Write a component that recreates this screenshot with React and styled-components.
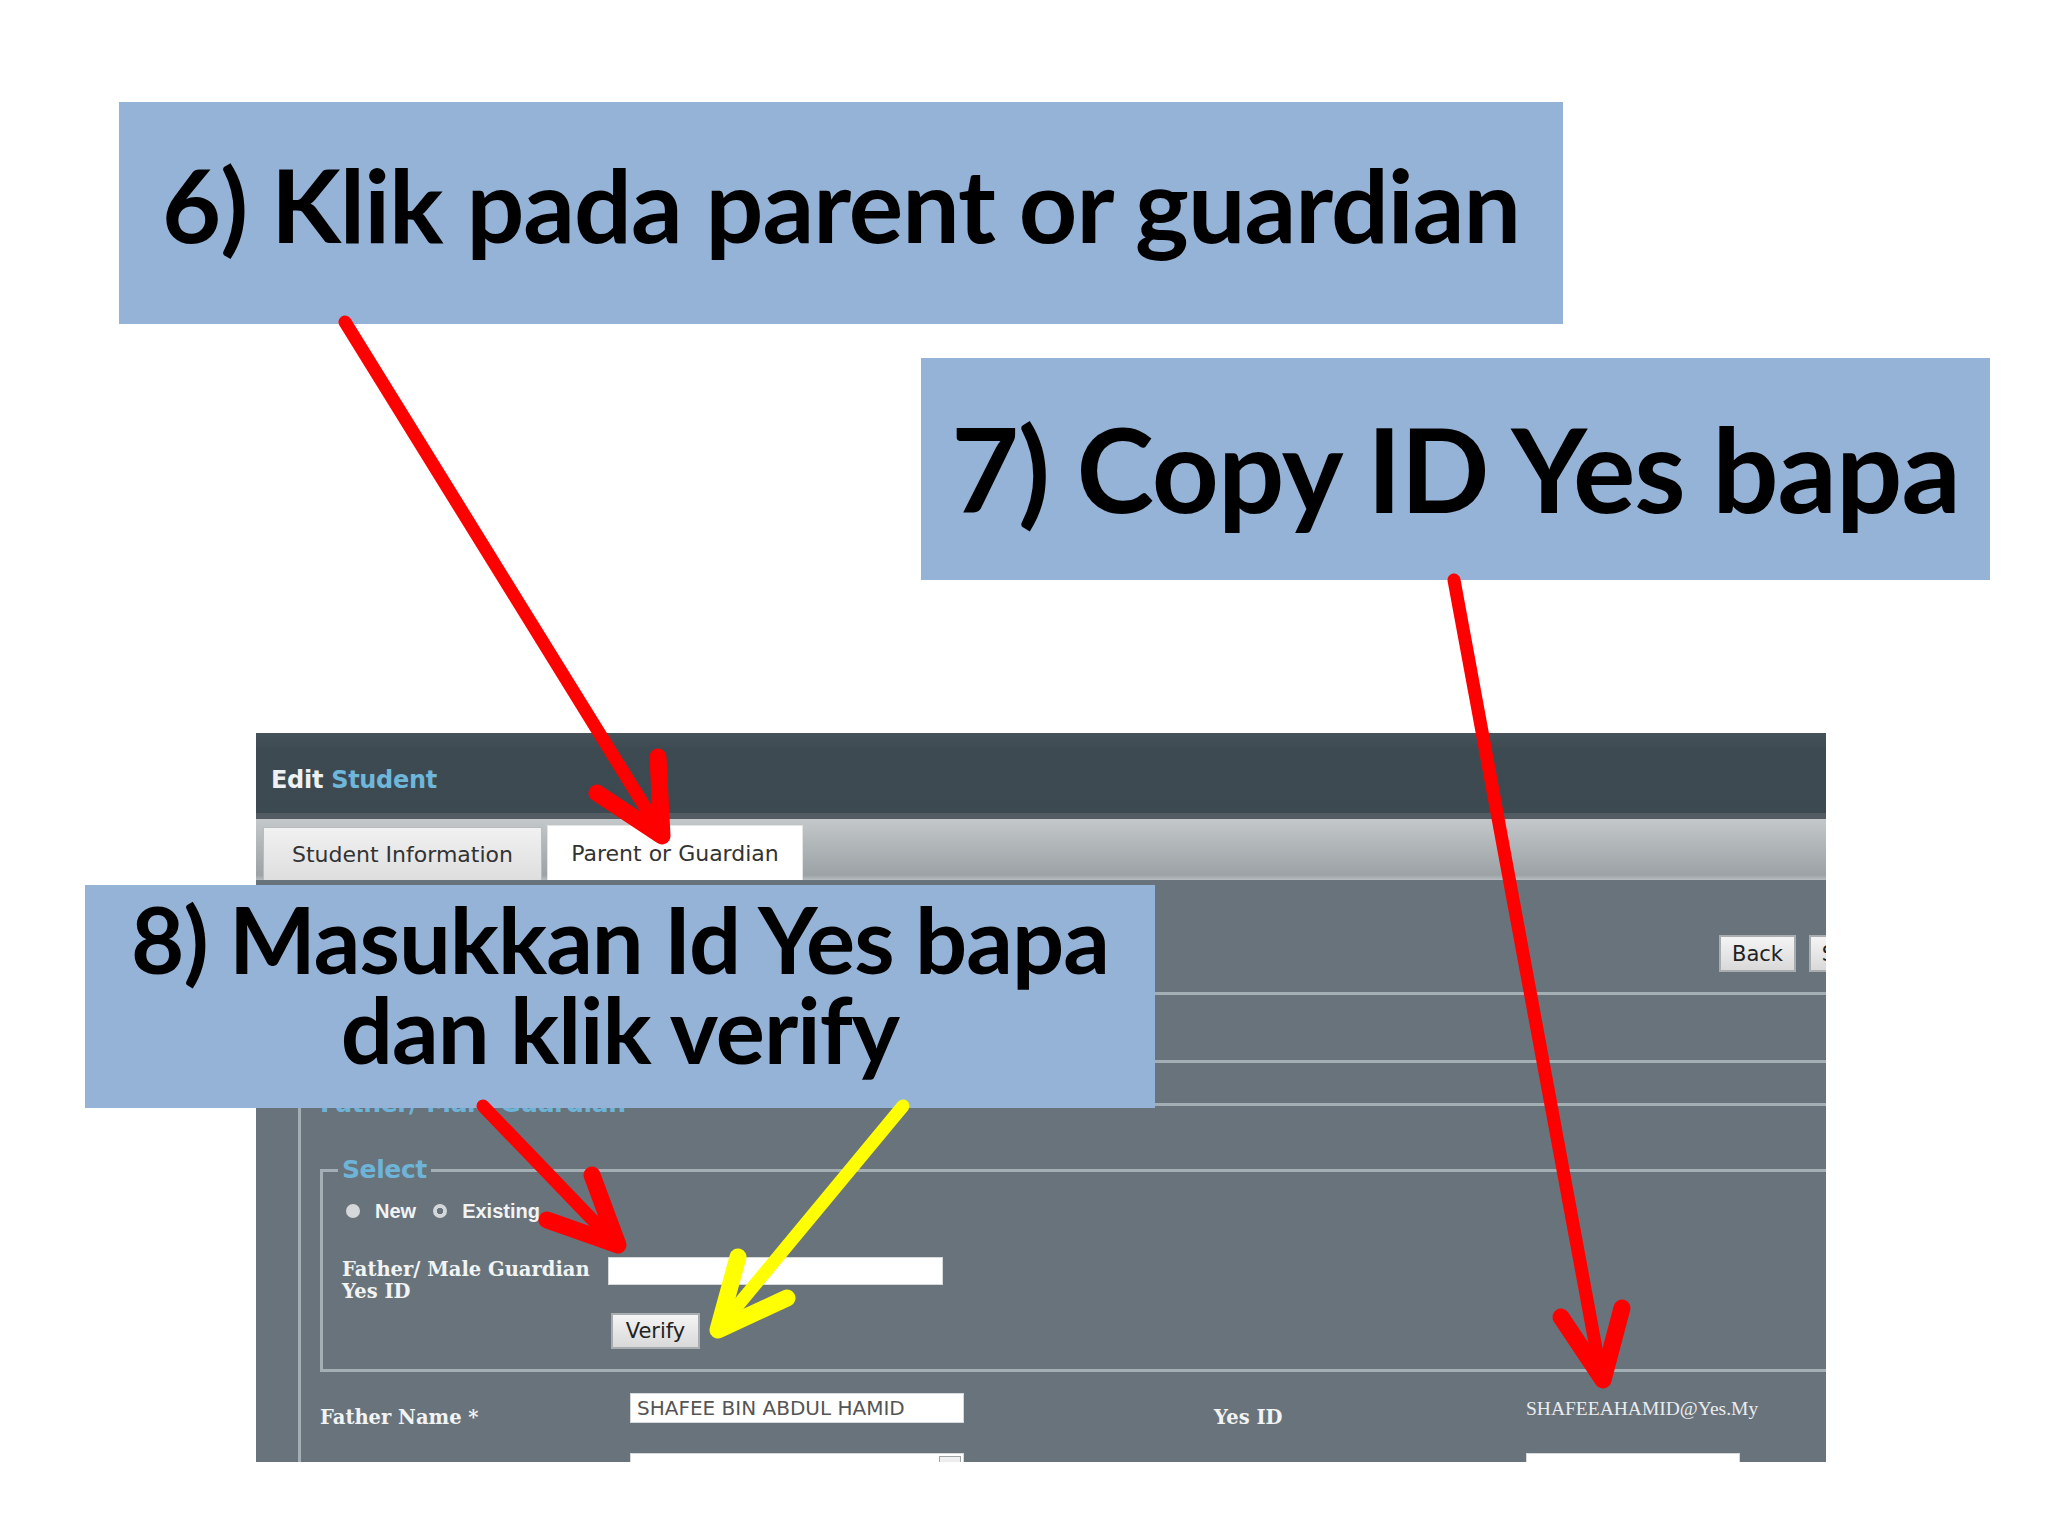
import React from 'react';
import styled, { createGlobalStyle } from 'styled-components';

const GlobalStyle = createGlobalStyle`
  html, body {
    margin: 0;
    padding: 0;
    background: #ffffff;
  }
  #root {
    width: 2048px;
    height: 1536px;
  }
`;

const arrows = [
  { color: '#ff0000', shaft: [345, 322, 658, 828], barb: '597,793 662,836 658,757' },
  { color: '#ff0000', shaft: [1454, 580, 1600, 1370], barb: '1561,1317 1603,1380 1622,1308' },
  { color: '#ff0000', shaft: [483, 1106, 610, 1238], barb: '547,1220 618,1245 592,1175' },
  { color: '#ffff00', shaft: [903, 1106, 724, 1322], barb: '738,1257 718,1330 787,1298' },
];

export default function App() {
  return (
    <>
      <GlobalStyle />
      <Slide>
        <Panel>
          <Header>
            <HeaderTitle>
              Edit <Accent>Student</Accent>
            </HeaderTitle>
          </Header>
          <TabBar>
            <Tab $width={279}>Student Information</Tab>
            <Tab $width={256} $active>Parent or Guardian</Tab>
          </TabBar>
          <Body>
            <Content>
              <ButtonRow>
                <Button>Back</Button>
                <Button>Save</Button>
              </ButtonRow>
              <Rule $top={20} />
              <Rule $top={65} />
              <GuardianSet>
                <SetTitle>Father/ Male Guardian</SetTitle>
                <SelectSet>
                  <SetTitle>Select</SetTitle>
                  <RadioRow>
                    <Radio />
                    <RadioText>New</RadioText>
                    <Radio $ring />
                    <RadioText>Existing</RadioText>
                  </RadioRow>
                  <LookupGrid>
                    <FieldLabel>
                      Father/ Male Guardian
                      <br />
                      Yes ID
                    </FieldLabel>
                    <TextBox $width={335} />
                    <span />
                    <Button $small>Verify</Button>
                  </LookupGrid>
                </SelectSet>
                <DataGrid>
                  <RowLabel>Father Name *</RowLabel>
                  <TextBox $width={334}>SHAFEE BIN ABDUL HAMID</TextBox>
                  <RowLabel>Yes ID</RowLabel>
                  <IdValue>SHAFEEAHAMID@Yes.My</IdValue>
                  <span />
                  <SelectBox>
                    <SelectArrow />
                  </SelectBox>
                  <span />
                  <TextBox $width={214} />
                </DataGrid>
              </GuardianSet>
            </Content>
          </Body>
        </Panel>

        <Callout $left={119} $top={102} $width={1444} $height={222} $size={102} $lift={10}>
          6) Klik pada parent or guardian
        </Callout>
        <Callout $left={921} $top={358} $width={1069} $height={222} $size={117} $lift={1}>
          7) Copy ID Yes bapa
        </Callout>
        <Callout $left={85} $top={885} $width={1070} $height={223} $size={92} $lift={13} $lines>
          8) Masukkan Id Yes bapa
          <br />
          dan klik verify
        </Callout>

        <ArrowLayer viewBox="0 0 2048 1536">
          {arrows.map((a, i) => (
            <g key={i} stroke={a.color} fill="none" strokeLinecap="round" strokeLinejoin="round">
              <line x1={a.shaft[0]} y1={a.shaft[1]} x2={a.shaft[2]} y2={a.shaft[3]} strokeWidth="13" />
              <polyline points={a.barb} strokeWidth="17" />
            </g>
          ))}
        </ArrowLayer>
      </Slide>
    </>
  );
}

const Slide = styled.div`
  position: relative;
  width: 2048px;
  height: 1536px;
  box-sizing: border-box;
  padding: 733px 0 0 256px;
  overflow: hidden;
  background: #ffffff;
`;

const Panel = styled.div`
  width: 1570px;
  height: 729px;
  overflow: hidden;
  display: flex;
  flex-direction: column;
  background: #69737b;
`;

const Header = styled.div`
  height: 80px;
  flex: none;
  box-sizing: border-box;
  padding: 33px 0 0 15px;
  background: linear-gradient(#46525a 0%, #3e4a51 20%, #3d4950 100%);
`;

const HeaderTitle = styled.div`
  font-family: "DejaVu Sans", sans-serif;
  font-weight: bold;
  font-size: 24px;
  line-height: 28px;
  letter-spacing: -0.3px;
  color: #eef1f2;
`;

const Accent = styled.span`
  color: #6eb6da;
`;

const TabBar = styled.div`
  height: 67px;
  flex: none;
  box-sizing: border-box;
  display: flex;
  align-items: flex-end;
  gap: 5px;
  padding-left: 7px;
  border-top: 6px solid #535c62;
  background: linear-gradient(#c4c8cb 0%, #b4b9bc 35%, #9da2a6 92%, #b8bdc0 100%);
`;

const Tab = styled.div`
  width: ${({ $width }) => $width}px;
  height: ${({ $active }) => ($active ? 55 : 53)}px;
  box-sizing: border-box;
  display: flex;
  align-items: center;
  justify-content: center;
  font-family: "DejaVu Sans", sans-serif;
  font-size: 22px;
  color: #333;
  background: ${({ $active }) => ($active ? '#ffffff' : 'linear-gradient(#f1f1f1, #dedede)')};
  border: 1px solid ${({ $active }) => ($active ? '#e4e4e4' : '#b9bcbe')};
  border-bottom: none;
`;

const Body = styled.div`
  flex: 1;
  background: #69737b;
`;

const Content = styled.div`
  width: 1634px;
  box-sizing: border-box;
  padding: 55px 4px 0 14px;
`;

const ButtonRow = styled.div`
  display: flex;
  justify-content: flex-end;
  gap: 13px;
`;

const Button = styled.div`
  width: ${({ $small }) => ($small ? 89 : 77)}px;
  height: ${({ $small }) => ($small ? 36 : 37)}px;
  box-sizing: border-box;
  display: flex;
  align-items: center;
  justify-content: center;
  font-family: "DejaVu Sans", sans-serif;
  font-size: 21px;
  color: #222;
  background: linear-gradient(#f4f4f4, #d9d9d9);
  border: 2px solid #a9adb0;
  ${({ $small }) => $small && 'margin-left: 3px;'}
`;

const Rule = styled.div`
  height: 3px;
  margin-top: ${({ $top }) => $top}px;
  background: #a4aeb5;
`;

const GuardianSet = styled.fieldset`
  margin: 26px 0 0 28px;
  padding: 0 0 0 19px;
  min-inline-size: 0;
  border: none;
  border-top: 3px solid #a4aeb5;
  border-left: 3px solid #a4aeb5;
`;

const SetTitle = styled.legend`
  margin-left: -4px;
  padding: 0 4px;
  font-family: "DejaVu Sans", sans-serif;
  font-weight: bold;
  font-size: 25px;
  line-height: 30px;
  letter-spacing: -0.4px;
  color: #6eb4d8;
`;

const SelectSet = styled.fieldset`
  margin: 36px 0 0 0;
  padding: 13px 0 20px 19px;
  min-inline-size: 0;
  border: none;
  border-top: 3px solid #a4aeb5;
  border-left: 3px solid #a4aeb5;
  border-bottom: 3px solid #a4aeb5;
`;

const RadioRow = styled.div`
  display: flex;
  align-items: center;
  height: 26px;
`;

const Radio = styled.span`
  width: 14px;
  height: 14px;
  margin: 0 15px 0 4px;
  border-radius: 50%;
  box-sizing: border-box;
  background: ${({ $ring }) => ($ring ? 'radial-gradient(circle, #6a747c 0 3px, #d4d8da 3.5px)' : '#d4d8da')};
`;

const RadioText = styled.span`
  margin-right: 13px;
  font-family: "Liberation Sans", Arial, sans-serif;
  font-weight: bold;
  font-size: 20px;
  color: #f1f3f4;
`;

const LookupGrid = styled.div`
  display: grid;
  grid-template-columns: 266px auto;
  grid-template-rows: 28px 36px;
  justify-content: start;
  row-gap: 28px;
  margin-top: 33px;
`;

const FieldLabel = styled.div`
  padding-top: 2px;
  font-family: "DejaVu Serif", serif;
  font-weight: bold;
  font-size: 19.5px;
  line-height: 22px;
  white-space: nowrap;
  color: #f1f3f4;
`;

const TextBox = styled.div`
  width: ${({ $width }) => $width}px;
  height: ${({ children }) => (children ? 30 : 28)}px;
  box-sizing: border-box;
  padding-left: 6px;
  display: flex;
  align-items: center;
  font-family: "DejaVu Sans", sans-serif;
  font-size: 20px;
  color: #555;
  background: #ffffff;
  border: 1px solid #d6d9db;
`;

const DataGrid = styled.div`
  display: grid;
  grid-template-columns: 310px 584px 312px auto;
  grid-template-rows: 30px 28px;
  align-items: start;
  row-gap: 30px;
  margin-top: 21px;
`;

const RowLabel = styled.div`
  padding-top: 12px;
  font-family: "DejaVu Serif", serif;
  font-weight: bold;
  font-size: 19.5px;
  line-height: 26px;
  white-space: nowrap;
  color: #f1f3f4;
`;

const IdValue = styled.div`
  padding-top: 4px;
  font-family: "Liberation Serif", "Times New Roman", serif;
  font-size: 19.5px;
  line-height: 24px;
  color: #e9ecee;
`;

const SelectBox = styled.div`
  width: 334px;
  height: 28px;
  box-sizing: border-box;
  display: flex;
  justify-content: flex-end;
  padding: 2px;
  background: #ffffff;
  border: 1px solid #d6d9db;
`;

const SelectArrow = styled.span`
  width: 20px;
  background: linear-gradient(#f2f2f2, #d6d6d6);
  border: 1px solid #9ea3a6;
`;

const Callout = styled.div`
  position: absolute;
  left: ${({ $left }) => $left}px;
  top: ${({ $top }) => $top}px;
  width: ${({ $width }) => $width}px;
  height: ${({ $height }) => $height}px;
  box-sizing: border-box;
  padding-bottom: ${({ $lift }) => $lift * 2}px;
  display: flex;
  align-items: center;
  justify-content: center;
  text-align: center;
  white-space: nowrap;
  background: #95b3d7;
  font-family: Lato, "Open Sans", sans-serif;
  font-weight: bold;
  font-size: ${({ $size }) => $size}px;
  line-height: ${({ $lines }) => ($lines ? '90px' : 'normal')};
  letter-spacing: -1px;
  color: #000000;
`;

const ArrowLayer = styled.svg`
  position: absolute;
  left: 0;
  top: 0;
  width: 2048px;
  height: 1536px;
  pointer-events: none;
`;
